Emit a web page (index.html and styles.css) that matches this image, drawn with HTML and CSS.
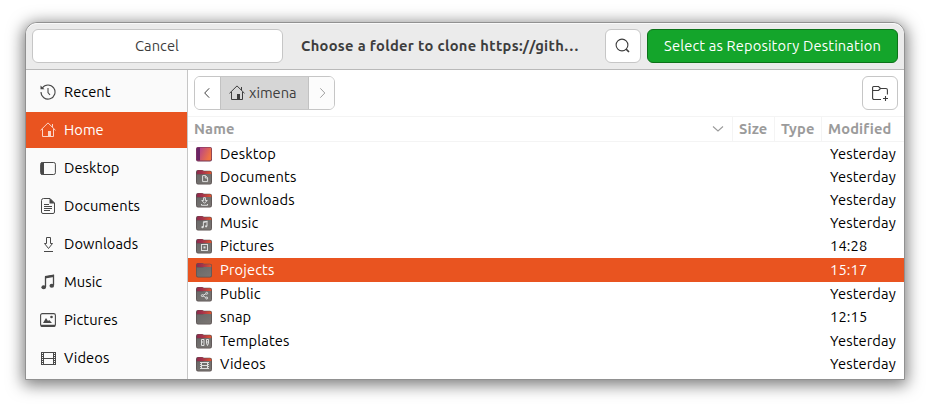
FILE: index.html
```html
<!DOCTYPE html>
<html lang="en">
<head>
<meta charset="utf-8">
<title>Choose a folder</title>
<link rel="stylesheet" href="styles.css">
</head>
<body>
<svg class="defs" aria-hidden="true">
  <defs>
    <linearGradient id="tab" x1="0" x2="1"><stop offset="0" stop-color="#8c2a4c"/><stop offset="0.4" stop-color="#a5344a"/><stop offset="1" stop-color="#e2552f"/></linearGradient>
    <linearGradient id="desk" x1="0" x2="1" y2="0.4"><stop offset="0" stop-color="#a8389a"/><stop offset="1" stop-color="#f07343"/></linearGradient>
    <linearGradient id="body" x1="0" x2="1" y2="1"><stop offset="0" stop-color="#686868"/><stop offset="1" stop-color="#7b7673"/></linearGradient>
  </defs>
  <symbol id="folder" viewBox="0 0 16 16">
    <path d="M0 3Q0 1 2 1H6L8 1.8H14Q16 1.8 16 4V13Q16 15.5 14 15.5H2Q0 15.5 0 13Z" fill="#5a5050"/>
    <path d="M.8 5V2.8Q.8 1.3 2.4 1.3H6L8 2.2H14Q15.4 2.2 15.4 4V5.3H.8Z" fill="url(#tab)"/>
    <path d="M.7 5.6H6.5L8.3 4.9H15.3V13Q15.3 14.8 13.8 14.8H2.2Q.7 14.8 .7 13Z" fill="url(#body)"/>
  </symbol>
  <symbol id="home" viewBox="0 0 16 16">
    <path d="M.5 8.3L8 .9L15.5 8.3M2.5 7V14.5H13.5V7M12.5 5V2" fill="none" stroke="currentColor"/>
    <path d="M8 9H11V15H8Z" fill="currentColor"/>
  </symbol>
</svg>
<main class="window">
  <header class="titlebar">
    <button class="btn cancel">Cancel</button>
    <h1>Choose a folder to clone https://gith…</h1>
    <button class="btn square" aria-label="Search"><svg class="icon" viewBox="0 0 16 16"><g fill="none" stroke="currentColor"><circle cx="7" cy="7" r="5.9" stroke-width="1.1"/><path d="M11.1 11.1L14 14" stroke-width="1.6"/></g></svg></button>
    <button class="btn select">Select as Repository Destination</button>
  </header>
  <div class="content">
    <nav class="sidebar">
      <a class="place"><svg class="icon" viewBox="0 0 16 16"><path d="M2.3 4A7 7 0 1 1 1 8M8 4V8.5L10 11" fill="none" stroke="currentColor" stroke-width="1.1"/><path d="M.5 1.5V5.3H4.5Z" fill="currentColor"/></svg><span>Recent</span></a>
      <a class="place active"><svg class="icon"><use href="#home"/></svg><span>Home</span></a>
      <a class="place"><svg class="icon" viewBox="0 0 16 16"><rect x=".6" y="2.5" width="14.8" height="12" rx="1.7" fill="none" stroke="currentColor"/><path d="M1 2.5H4V14.5H1Z" fill="currentColor"/></svg><span>Desktop</span></a>
      <a class="place"><svg class="icon" viewBox="0 0 16 16"><path d="M3.5.5H10L14.5 5V14Q14.5 15.5 13 15.5H3Q1.5 15.5 1.5 14V2.5Q1.5.5 3.5.5ZM4 6.5H9M4 8.5H12M4 10.5H12M4 12.5H10" fill="none" stroke="currentColor"/><path d="M9.5 0L15 5.5H9.5Z" fill="currentColor"/></svg><span>Documents</span></a>
      <a class="place"><svg class="icon" viewBox="0 0 16 16"><path d="M6.5 1.5H10.5V7.5H12.5L8.5 12.5L4.5 7.5H6.5ZM4 15.5H13" fill="none" stroke="currentColor"/></svg><span>Downloads</span></a>
      <a class="place"><svg class="icon" viewBox="0 0 16 16"><path d="M5.5 13V3L13.5 1.5V11" fill="none" stroke="currentColor" stroke-width="1.3"/><path d="M5 2L14 .5V3L5 4.5Z" fill="currentColor"/><ellipse cx="3.7" cy="13.3" rx="2.3" ry="2" fill="currentColor"/><ellipse cx="11.8" cy="11.8" rx="2.3" ry="2" fill="currentColor"/></svg><span>Music</span></a>
      <a class="place"><svg class="icon" viewBox="0 0 16 16"><rect x=".6" y="1.6" width="14.8" height="12.8" rx="1.7" fill="none" stroke="currentColor" stroke-width="1.1"/><path d="M1 12.8H15V14.8H1ZM3 11L6 6L8 9L9.2 8L12 11Z" fill="currentColor"/><circle cx="11.5" cy="5" r="1.3" fill="currentColor"/></svg><span>Pictures</span></a>
      <a class="place"><svg class="icon" viewBox="0 0 16 16"><path d="M3.5 2V15M13.5 2V15M3.5 2.5H13.5M3.5 8.5H13.5M3.5 14.5H13.5" fill="none" stroke="currentColor"/><path d="M1.5 2V15M15.5 2V15" stroke="currentColor"/><path d="M2.5 2V15M14.5 2V15" stroke="currentColor" stroke-dasharray="1 1"/></svg><span>Videos</span></a>
    </nav>
    <section class="browser">
      <div class="toolbar">
        <div class="pathbar">
          <button class="step" aria-label="Back"><svg class="icon" viewBox="0 0 16 16"><path d="M9.2 3.3L4.7 8L9.2 12.7" fill="none" stroke="currentColor"/></svg></button>
          <button class="crumb"><svg class="icon"><use href="#home"/></svg><span>ximena</span></button>
          <button class="step dim" aria-label="Forward"><svg class="icon" viewBox="0 0 16 16"><path d="M6.3 3.3L10.8 8L6.3 12.7" fill="none" stroke="currentColor"/></svg></button>
        </div>
        <button class="btn square" aria-label="New folder"><svg class="icon" viewBox="0 0 16 16"><path d="M9 14.5H2.2Q.6 14.5 .6 13V2.5Q.6 1.5 1.6 1.5H6.5L8.5 3.5H14Q15.4 3.5 15.4 5V9.5M.6 5.5H6.5L8.5 3.5M13.5 11V16M11 13.5H16" fill="none" stroke="currentColor" stroke-width="1.1"/></svg></button>
      </div>
      <div class="columns">
        <div class="col name"><span>Name</span><svg class="arrow" viewBox="0 0 12 8"><path d="M1 1.5L6 6L11 1.5" fill="none" stroke="currentColor" stroke-width="1.1"/></svg></div>
        <div class="col size">Size</div>
        <div class="col type">Type</div>
        <div class="col modified">Modified</div>
      </div>
      <div class="files">
        <div class="row tall"><svg class="icon" viewBox="0 0 16 16"><rect y="1" width="16" height="14.5" rx="2" fill="#713455"/><rect x=".7" y="1.5" width="14.6" height="13" rx="1.5" fill="url(#desk)"/><path d="M2 1.5H4V14.5H2Q.7 14.5 .7 13V3Q.7 1.5 2 1.5Z" fill="#6b2465"/></svg><span>Desktop</span><time>Yesterday</time></div>
        <div class="row"><svg class="icon" viewBox="0 0 16 16"><use href="#folder"/><path d="M6.6 6.6H9.5L11.6 8.8V12.6H6.6ZM9.3 6.6V9H11.6" class="mark"/></svg><span>Documents</span><time>Yesterday</time></div>
        <div class="row"><svg class="icon" viewBox="0 0 16 16"><use href="#folder"/><path d="M7.6 5.7H9.4V8.5H11.2L8.5 11.3L5.8 8.5H7.6ZM5.5 12V13.3H11.5V12" class="mark"/></svg><span>Downloads</span><time>Yesterday</time></div>
        <div class="row"><svg class="icon" viewBox="0 0 16 16"><use href="#folder"/><path d="M7.4 12.2V7.3L11 6.5V11.2" class="mark"/><path d="M7 6.5L11.5 5.7V7L7 7.8Z" fill="#dedede"/><circle cx="6.5" cy="12.2" r="1.1" fill="#dedede"/><circle cx="10.1" cy="11.3" r="1.1" fill="#dedede"/></svg><span>Music</span><time>Yesterday</time></div>
        <div class="row"><svg class="icon" viewBox="0 0 16 16"><use href="#folder"/><rect x="5.5" y="6.5" width="6" height="6" class="mark"/><rect x="7.5" y="8.4" width="2" height="2" fill="#dedede"/></svg><span>Pictures</span><time>14:28</time></div>
        <div class="row tall chosen"><svg class="icon"><use href="#folder"/></svg><span>Projects</span><time>15:17</time></div>
        <div class="row tall"><svg class="icon" viewBox="0 0 16 16"><use href="#folder"/><g fill="#6f6d6c" stroke="#dedede"><path d="M6.5 9.6L10.7 7.3M6.5 9.6L10.7 12"/><circle cx="6.3" cy="9.6" r="1"/><circle cx="10.7" cy="7.3" r="1"/><circle cx="10.7" cy="12" r="1"/></g></svg><span>Public</span><time>Yesterday</time></div>
        <div class="row"><svg class="icon"><use href="#folder"/></svg><span>snap</span><time>12:15</time></div>
        <div class="row tall"><svg class="icon" viewBox="0 0 16 16"><use href="#folder"/><path d="M5.5 6.5H8V12.5H5.5ZM10.5 6.5H12.5V10L11.5 12.5L10.5 10ZM5.5 9H7M10.5 9H12.5" class="mark"/></svg><span>Templates</span><time>Yesterday</time></div>
        <div class="row"><svg class="icon" viewBox="0 0 16 16"><use href="#folder"/><path d="M5.5 6V13M11.5 6V13M5.5 6.5H11.5M5.5 9.5H11.5M5.5 12.5H11.5" class="mark"/><path d="M4.5 6V13M12.5 6V13" class="mark" stroke-dasharray="1 1"/></svg><span>Videos</span><time>Yesterday</time></div>
      </div>
    </section>
  </div>
</main>
</body>
</html>
```
FILE: styles.css
```css
* { box-sizing: border-box; }

body {
  margin: 0;
  padding: 22px 25px 0;
  background: #fff;
  color: #000;
  font: 14.667px/20px Ubuntu, "Noto Sans", sans-serif;
  height: 408px;
  overflow: hidden;
}

.defs { position: absolute; width: 0; height: 0; }

.window {
  display: flex;
  flex-direction: column;
  height: 358px;
  border: 1px solid #919191;
  border-radius: 12px 12px 0 0;
  background: #fff;
  overflow: hidden;
  box-shadow: 0 3px 16px 2px rgba(0, 0, 0, 0.52);
}

button {
  margin: 0;
  padding: 0;
  font: inherit;
  color: #3d3d3d;
  white-space: nowrap;
}

.icon { display: block; width: 16px; height: 16px; flex: none; }

.titlebar {
  display: flex;
  gap: 6px;
  flex: none;
  height: 47px;
  padding: 5px 6px 0;
  background: #ebebeb;
  border-top: 1px solid #f9f9f9;
  border-bottom: 1px solid #b9b9b9;
  border-radius: 11px 11px 0 0;
}

.btn {
  display: flex;
  align-items: center;
  justify-content: center;
  height: 34px;
  border: 1px solid #c6c6c6;
  border-radius: 6px;
  background: #fff;
}

.cancel { width: 251px; padding-right: 1px; letter-spacing: 0.08px; }
.square { width: 36px; }

.select {
  width: 251px;
  background: #14a52b;
  border-color: #0c7219;
  color: #fff;
  letter-spacing: 0.15px;
}

h1 {
  flex: 1;
  margin: 0;
  padding-right: 8px;
  font-size: 14.667px;
  line-height: 34px;
  letter-spacing: 0.33px;
  text-align: center;
  color: #3d3d3d;
  white-space: nowrap;
}

.content { display: flex; flex: 1; min-height: 0; }

.sidebar {
  display: flex;
  flex-direction: column;
  gap: 2px;
  width: 162px;
  padding-top: 4px;
  background: #fafafa;
  border-right: 1px solid #c6c6c6;
  letter-spacing: 0.06px;
}

.place {
  display: flex;
  align-items: center;
  gap: 8px;
  flex: none;
  height: 36px;
  padding-left: 14px;
}

.place .icon { color: #484848; }
.active { background: #e95420; color: #fff; }
.active .icon { color: #fbd5c8; }

.browser { flex: 1; min-width: 0; }

.toolbar {
  display: flex;
  justify-content: space-between;
  height: 46px;
  padding: 6px 6px 0;
}

.pathbar {
  display: flex;
  width: 141px;
  height: 34px;
  border: 1px solid #c6c6c6;
  border-radius: 6px;
  overflow: hidden;
  letter-spacing: 0.06px;
}

.step {
  display: flex;
  align-items: center;
  justify-content: center;
  width: 25px;
  border: 0;
  background: #fff;
}

.step.dim { color: #a0a0a0; background: #fcfcfc; }

.crumb {
  display: flex;
  flex: 1;
  align-items: center;
  gap: 4px;
  padding-left: 8px;
  border: 0 solid #c2c2c2;
  border-width: 0 1px;
  background: #d6d6d6;
}

.columns {
  display: flex;
  height: 26px;
  border: 0 solid #f4f4f4;
  border-width: 1px 0;
  color: #9b9b9b;
  font-weight: bold;
  line-height: 24px;
  letter-spacing: 0.15px;
}

.col { padding-left: 6px; border-right: 1px solid #f4f4f4; white-space: nowrap; }
.name { display: flex; align-items: center; justify-content: space-between; width: 545px; padding-right: 8px; }
.arrow { width: 12px; height: 8px; }
.size { width: 42px; }
.type { width: 47px; }
.modified { flex: 1; border-right: 0; }

.files { letter-spacing: 0.12px; }

.row {
  display: flex;
  align-items: center;
  gap: 8px;
  height: 23px;
  padding: 0 8px 1px;
}

.tall { height: 24px; padding-bottom: 0; }
.row time { margin-left: auto; width: 66px; white-space: nowrap; }
.chosen { background: #e95420; color: #fff; }
.mark { fill: none; stroke: #dedede; stroke-width: 1; }
```
